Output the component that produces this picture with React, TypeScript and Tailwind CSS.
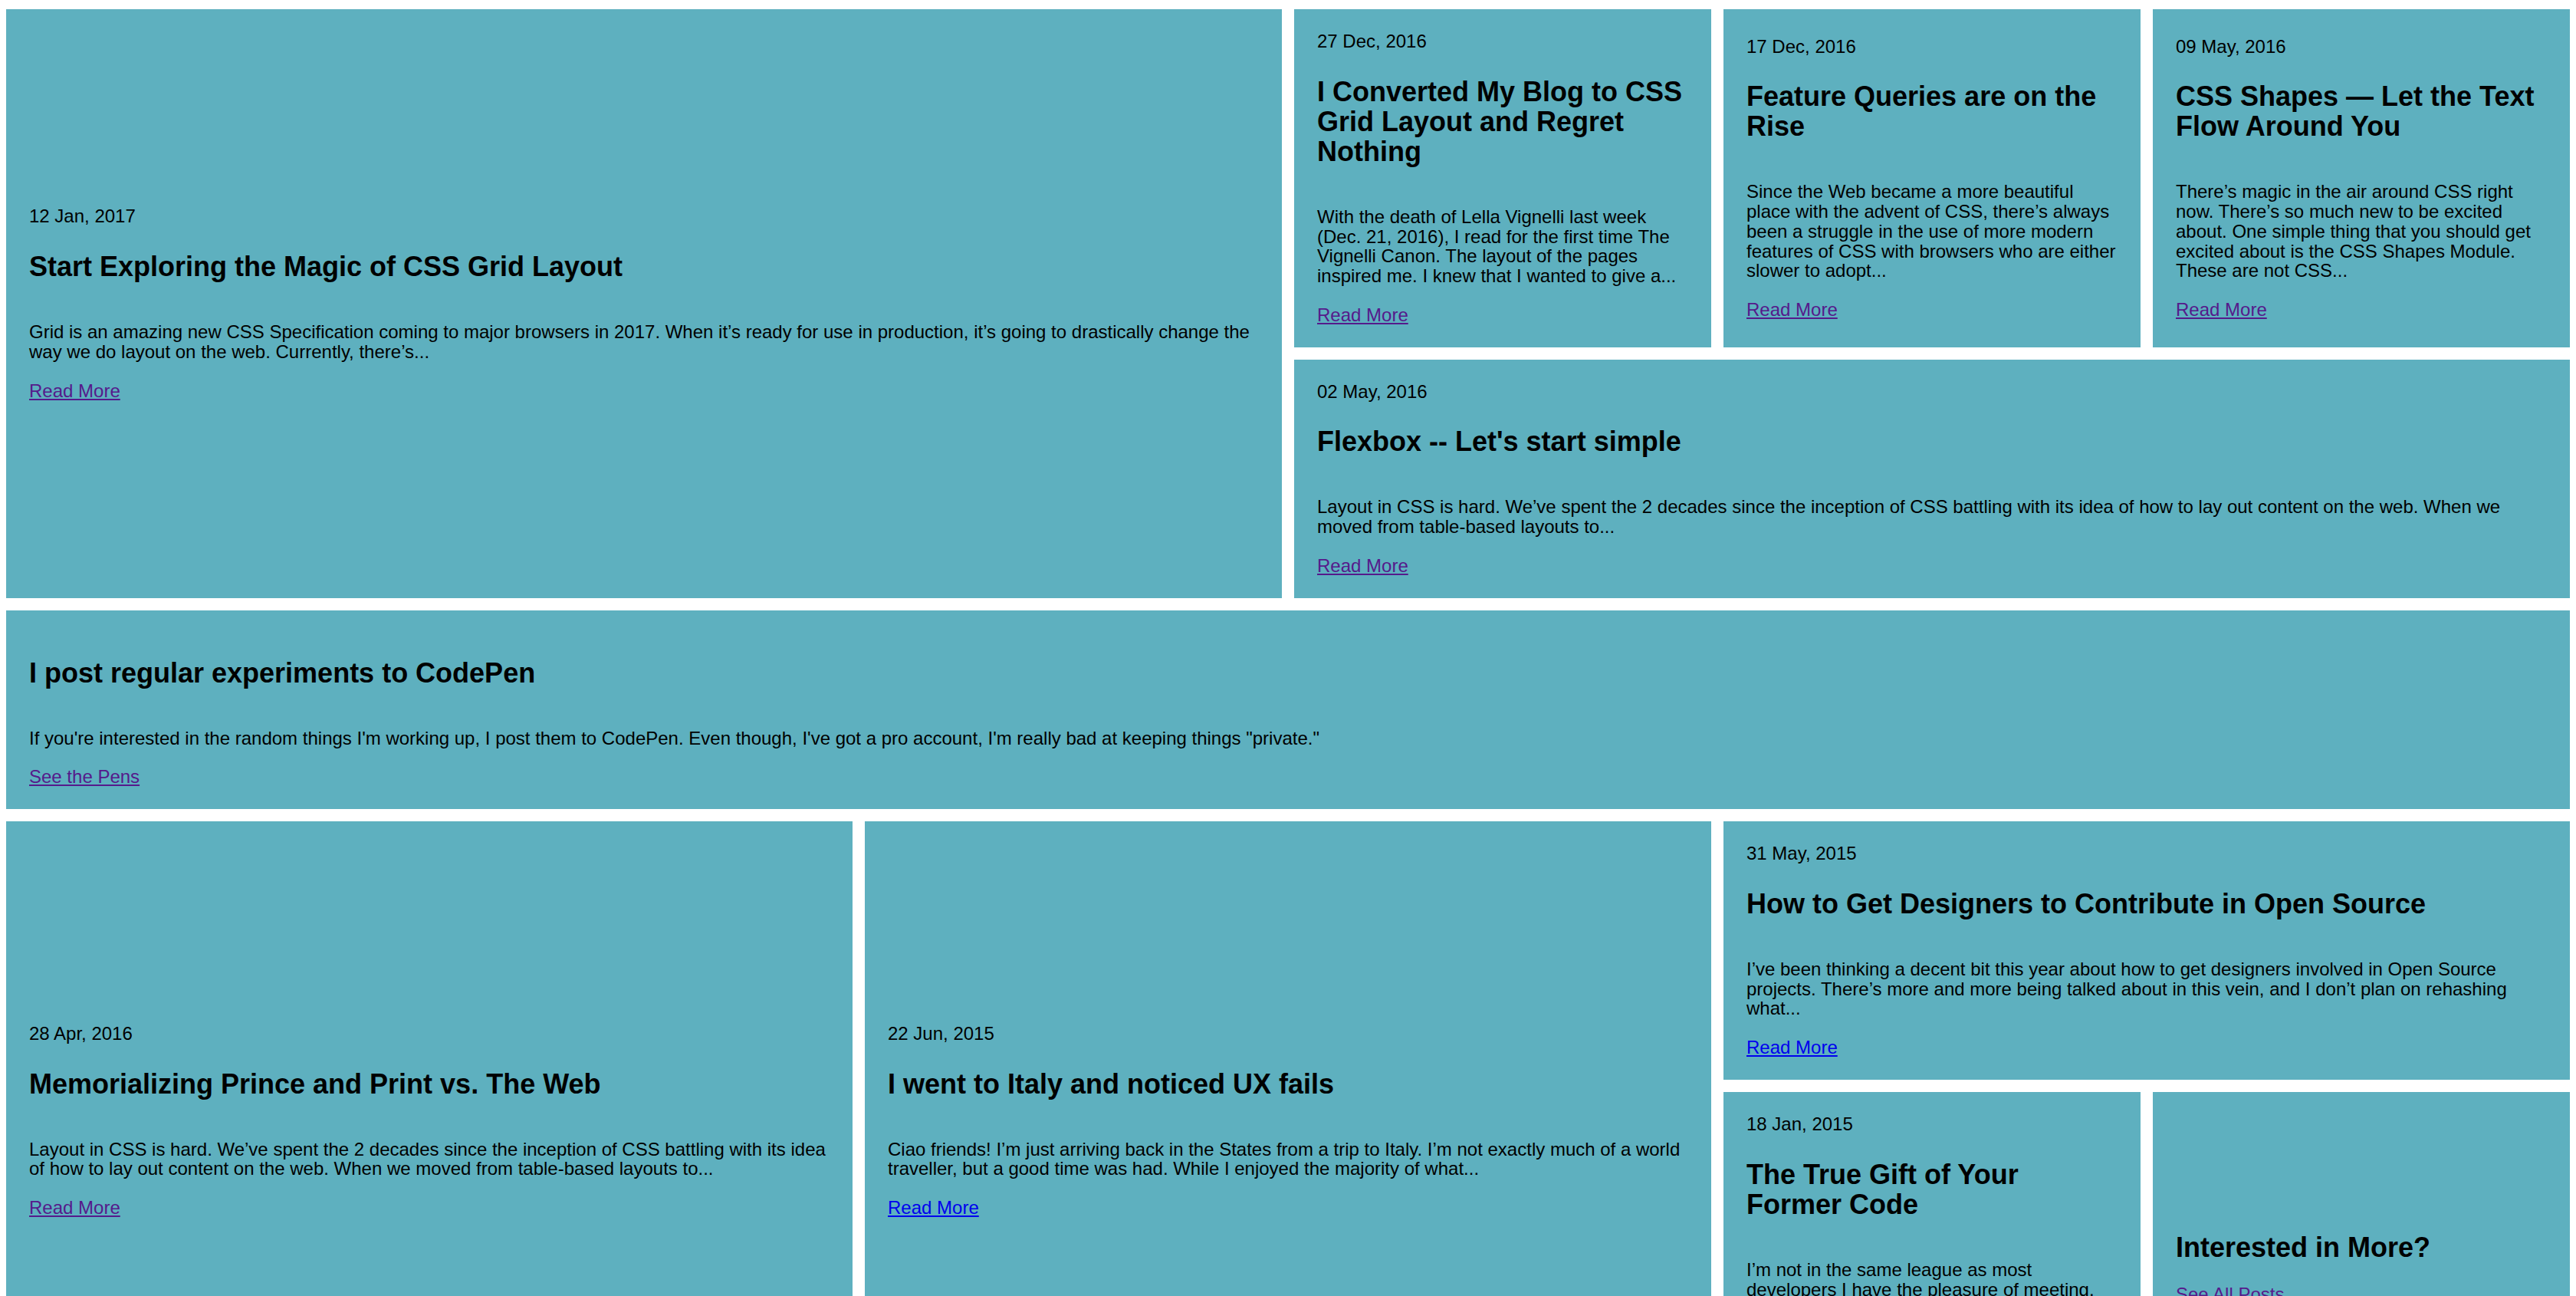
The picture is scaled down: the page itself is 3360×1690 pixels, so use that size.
type Post = {
  date?: string;
  title: string;
  excerpt?: string;
  link: string;
  visited?: boolean;
  span: string;
  tight?: boolean;
};

const posts: Post[] = [
  {
    date: "12 Jan, 2017",
    title: "Start Exploring the Magic of CSS Grid Layout",
    excerpt:
      "Grid is an amazing new CSS Specification coming to major browsers in 2017. When it’s ready for use in production, it’s going to drastically change the way we do layout on the web. Currently, there’s...",
    link: "Read More",
    visited: true,
    span: "col-span-6 row-span-2",
  },
  {
    date: "27 Dec, 2016",
    title: "I Converted My Blog to CSS Grid Layout and Regret Nothing",
    excerpt:
      "With the death of Lella Vignelli last week (Dec. 21, 2016), I read for the first time The Vignelli Canon. The layout of the pages inspired me. I knew that I wanted to give a...",
    link: "Read More",
    visited: true,
    span: "col-span-2",
  },
  {
    date: "17 Dec, 2016",
    title: "Feature Queries are on the Rise",
    excerpt:
      "Since the Web became a more beautiful place with the advent of CSS, there’s always been a struggle in the use of more modern features of CSS with browsers who are either slower to adopt...",
    link: "Read More",
    visited: true,
    span: "col-span-2",
  },
  {
    date: "09 May, 2016",
    title: "CSS Shapes — Let the Text Flow Around You",
    excerpt:
      "There’s magic in the air around CSS right now. There’s so much new to be excited about. One simple thing that you should get excited about is the CSS Shapes Module. These are not CSS...",
    link: "Read More",
    visited: true,
    span: "col-span-2",
  },
  {
    date: "02 May, 2016",
    title: "Flexbox -- Let's start simple",
    excerpt:
      "Layout in CSS is hard. We’ve spent the 2 decades since the inception of CSS battling with its idea of how to lay out content on the web. When we moved from table-based layouts to...",
    link: "Read More",
    visited: true,
    span: "col-span-6",
  },
  {
    title: "I post regular experiments to CodePen",
    excerpt:
      "If you're interested in the random things I'm working up, I post them to CodePen. Even though, I've got a pro account, I'm really bad at keeping things \"private.\"",
    link: "See the Pens",
    visited: true,
    span: "col-span-12",
  },
  {
    date: "28 Apr, 2016",
    title: "Memorializing Prince and Print vs. The Web",
    excerpt:
      "Layout in CSS is hard. We’ve spent the 2 decades since the inception of CSS battling with its idea of how to lay out content on the web. When we moved from table-based layouts to...",
    link: "Read More",
    visited: true,
    span: "col-span-4 row-span-2",
  },
  {
    date: "22 Jun, 2015",
    title: "I went to Italy and noticed UX fails",
    excerpt:
      "Ciao friends! I’m just arriving back in the States from a trip to Italy. I’m not exactly much of a world traveller, but a good time was had. While I enjoyed the majority of what...",
    link: "Read More",
    span: "col-span-4 row-span-2",
  },
  {
    date: "31 May, 2015",
    title: "How to Get Designers to Contribute in Open Source",
    excerpt:
      "I’ve been thinking a decent bit this year about how to get designers involved in Open Source projects. There’s more and more being talked about in this vein, and I don’t plan on rehashing what...",
    link: "Read More",
    span: "col-span-4",
  },
  {
    date: "18 Jan, 2015",
    title: "The True Gift of Your Former Code",
    excerpt:
      "I’m not in the same league as most developers I have the pleasure of meeting. Honestly, I don’t have a computer science degree, and I learned most of what I know by breaking...",
    link: "Read More",
    visited: true,
    span: "col-span-2",
  },
  {
    title: "Interested in More?",
    link: "See All Posts",
    visited: true,
    span: "col-span-2",
    tight: true,
  },
];

const Card = ({ post }: { post: Post }) => {
  return (
    <article
      className={`${post.span} flex flex-col justify-center bg-[#5eb0bf] px-[30px] py-[29px] text-black`}
    >
      <p className="mb-[33px] text-[24px] leading-[25.76px]">{post.date}</p>
      <h2
        className={`text-[36px] font-bold leading-[39px] ${
          post.tight ? "mb-[29px]" : "mb-[53px]"
        }`}
      >
        {post.title}
      </h2>
      {post.excerpt && (
        <p className="mb-[25px] text-[24px] leading-[25.76px]">{post.excerpt}</p>
      )}
      <p className="text-[24px] leading-[25.76px]">
        <a
          href="#"
          className={`underline ${post.visited ? "text-[#551a8b]" : "text-[#0000ee]"}`}
        >
          {post.link}
        </a>
      </p>
    </article>
  );
};

export default function App() {
  return (
    <div className="min-h-screen bg-white px-2 pt-3 font-['Liberation_Sans',Arial,sans-serif]">
      <main className="grid grid-cols-12 gap-4">
        {posts.map((post) => (
          <Card key={post.title} post={post} />
        ))}
      </main>
    </div>
  );
}
